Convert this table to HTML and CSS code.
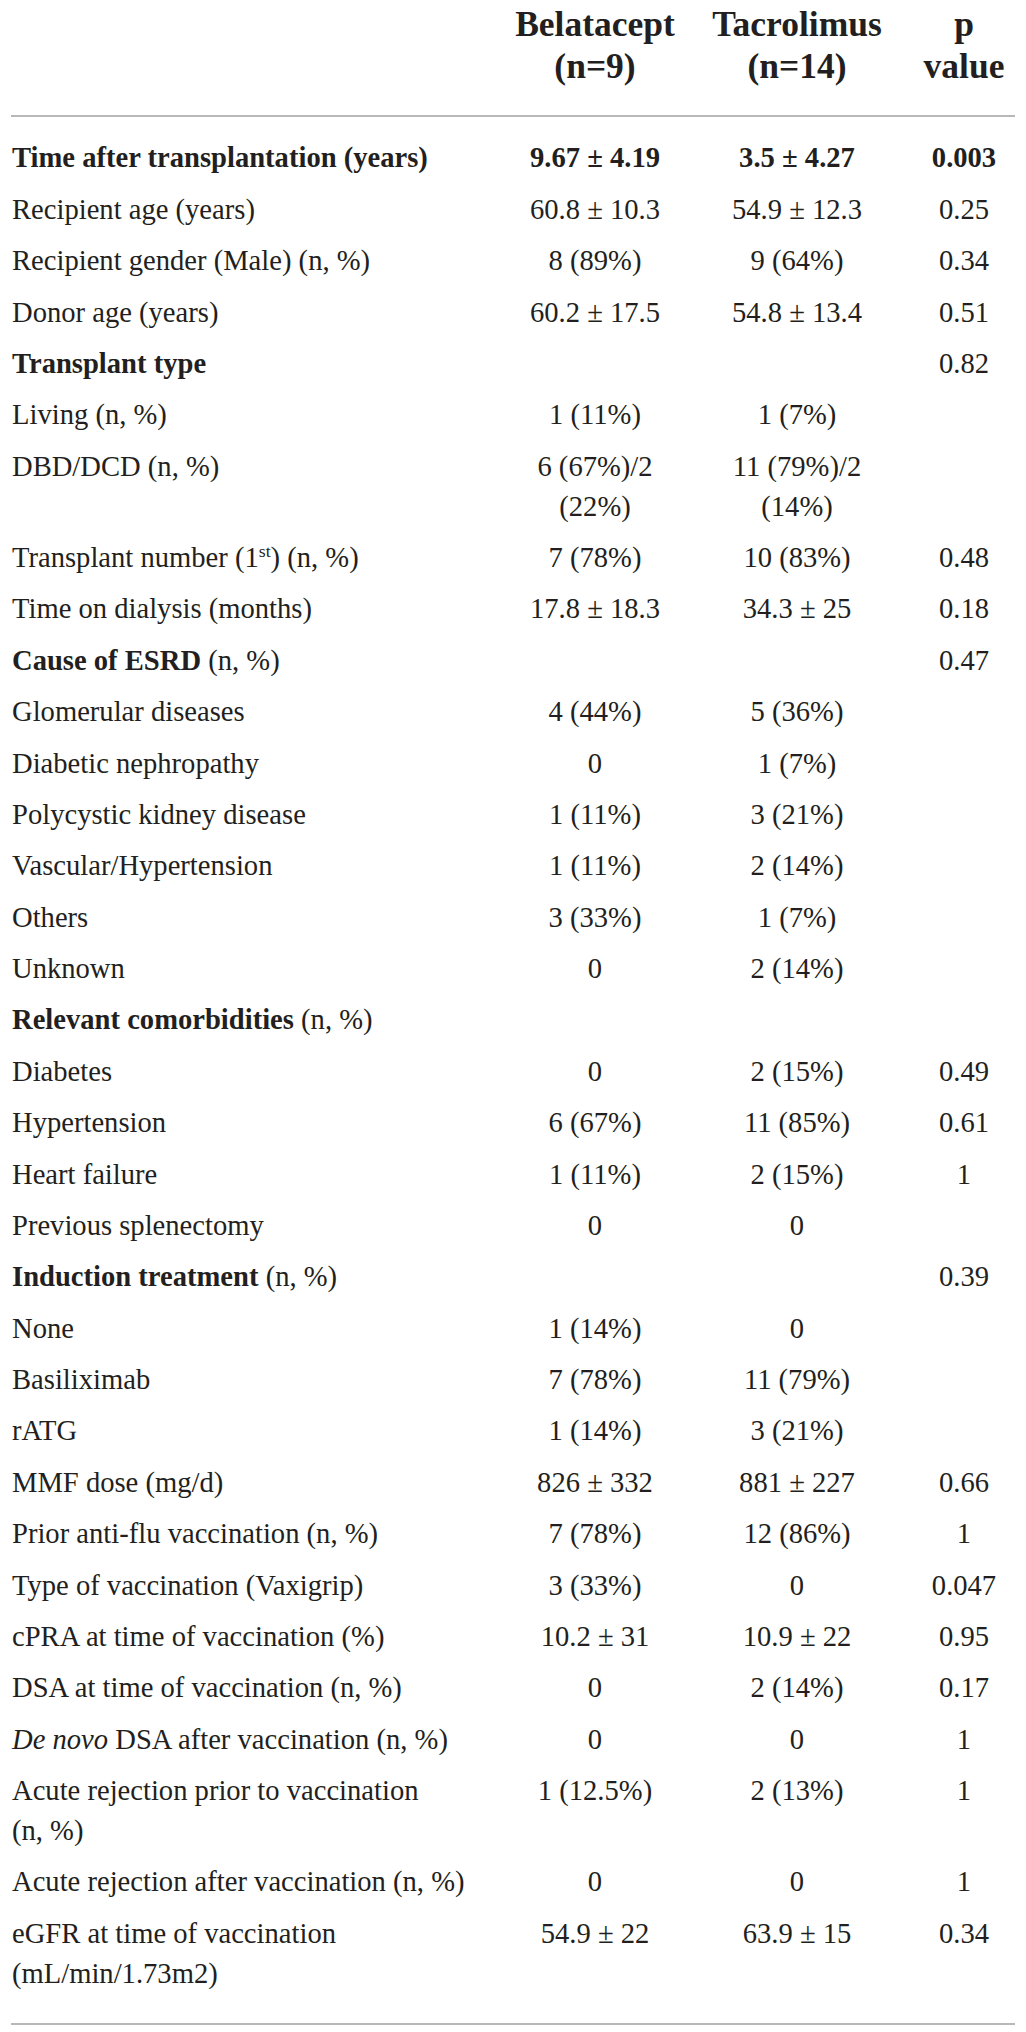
FILE: index.html
```html
<!DOCTYPE html>
<html lang="en">
<head>
<meta charset="utf-8">
<title>Table</title>
<link rel="stylesheet" href="styles.css">
</head>
<body>
<div class="wrap">
<table class="tbl">
  <colgroup>
    <col class="c-label">
    <col class="c-bel">
    <col class="c-tac">
    <col class="c-p">
  </colgroup>
  <thead>
    <tr>
      <th class="lbl"></th>
      <th>Belatacept (n=9)</th>
      <th>Tacrolimus (n=14)</th>
      <th>p value</th>
    </tr>
  </thead>
  <tbody>
    <tr class="first b"><td class="lbl">Time after transplantation (years)</td><td>9.67 ± 4.19</td><td>3.5 ± 4.27</td><td>0.003</td></tr>
    <tr><td class="lbl">Recipient age (years)</td><td>60.8 ± 10.3</td><td>54.9 ± 12.3</td><td>0.25</td></tr>
    <tr><td class="lbl">Recipient gender (Male) (n,&nbsp;%)</td><td>8 (89%)</td><td>9 (64%)</td><td>0.34</td></tr>
    <tr><td class="lbl">Donor age (years)</td><td>60.2 ± 17.5</td><td>54.8 ± 13.4</td><td>0.51</td></tr>
    <tr><td class="lbl"><strong>Transplant type</strong></td><td></td><td></td><td>0.82</td></tr>
    <tr><td class="lbl">Living (n,&nbsp;%)</td><td>1 (11%)</td><td>1 (7%)</td><td></td></tr>
    <tr><td class="lbl">DBD/DCD (n,&nbsp;%)</td><td>6 (67%)/2 (22%)</td><td>11 (79%)/2 (14%)</td><td></td></tr>
    <tr><td class="lbl">Transplant number (1<sup>st</sup>) (n,&nbsp;%)</td><td>7 (78%)</td><td>10 (83%)</td><td>0.48</td></tr>
    <tr><td class="lbl">Time on dialysis (months)</td><td>17.8 ± 18.3</td><td>34.3 ± 25</td><td>0.18</td></tr>
    <tr><td class="lbl"><strong>Cause of ESRD</strong> (n,&nbsp;%)</td><td></td><td></td><td>0.47</td></tr>
    <tr><td class="lbl">Glomerular diseases</td><td>4 (44%)</td><td>5 (36%)</td><td></td></tr>
    <tr><td class="lbl">Diabetic nephropathy</td><td>0</td><td>1 (7%)</td><td></td></tr>
    <tr><td class="lbl">Polycystic kidney disease</td><td>1 (11%)</td><td>3 (21%)</td><td></td></tr>
    <tr><td class="lbl">Vascular/Hypertension</td><td>1 (11%)</td><td>2 (14%)</td><td></td></tr>
    <tr><td class="lbl">Others</td><td>3 (33%)</td><td>1 (7%)</td><td></td></tr>
    <tr><td class="lbl">Unknown</td><td>0</td><td>2 (14%)</td><td></td></tr>
    <tr><td class="lbl"><strong>Relevant comorbidities</strong> (n,&nbsp;%)</td><td></td><td></td><td></td></tr>
    <tr><td class="lbl">Diabetes</td><td>0</td><td>2 (15%)</td><td>0.49</td></tr>
    <tr><td class="lbl">Hypertension</td><td>6 (67%)</td><td>11 (85%)</td><td>0.61</td></tr>
    <tr><td class="lbl">Heart failure</td><td>1 (11%)</td><td>2 (15%)</td><td>1</td></tr>
    <tr><td class="lbl">Previous splenectomy</td><td>0</td><td>0</td><td></td></tr>
    <tr><td class="lbl"><strong>Induction treatment</strong> (n,&nbsp;%)</td><td></td><td></td><td>0.39</td></tr>
    <tr><td class="lbl">None</td><td>1 (14%)</td><td>0</td><td></td></tr>
    <tr><td class="lbl">Basiliximab</td><td>7 (78%)</td><td>11 (79%)</td><td></td></tr>
    <tr><td class="lbl">rATG</td><td>1 (14%)</td><td>3 (21%)</td><td></td></tr>
    <tr><td class="lbl">MMF dose (mg/d)</td><td>826 ± 332</td><td>881 ± 227</td><td>0.66</td></tr>
    <tr><td class="lbl">Prior anti-flu vaccination (n,&nbsp;%)</td><td>7 (78%)</td><td>12 (86%)</td><td>1</td></tr>
    <tr><td class="lbl">Type of vaccination (Vaxigrip)</td><td>3 (33%)</td><td>0</td><td>0.047</td></tr>
    <tr><td class="lbl">cPRA at time of vaccination (%)</td><td>10.2 ± 31</td><td>10.9 ± 22</td><td>0.95</td></tr>
    <tr><td class="lbl">DSA at time of vaccination (n,&nbsp;%)</td><td>0</td><td>2 (14%)</td><td>0.17</td></tr>
    <tr><td class="lbl"><em>De novo</em> DSA after vaccination (n,&nbsp;%)</td><td>0</td><td>0</td><td>1</td></tr>
    <tr><td class="lbl">Acute rejection prior to vaccination (n,&nbsp;%)</td><td>1 (12.5%)</td><td>2 (13%)</td><td>1</td></tr>
    <tr><td class="lbl">Acute rejection after vaccination (n,&nbsp;%)</td><td>0</td><td>0</td><td>1</td></tr>
    <tr class="last"><td class="lbl">eGFR at time of vaccination (mL/min/1.73m2)</td><td>54.9 ± 22</td><td>63.9 ± 15</td><td>0.34</td></tr>
  </tbody>
</table>
</div>
</body>
</html>
```

FILE: styles.css
```css
html, body {
  margin: 0;
  padding: 0;
  background: #ffffff;
}

body {
  font-family: "Liberation Serif", "Times New Roman", serif;
  color: #231f20;
}

.wrap {
  padding: 0 11px;
}

.tbl {
  width: 1004px;
  border-collapse: collapse;
  table-layout: fixed;
}

.c-label { width: 498px; }
.c-bel { width: 172px; }
.c-tac { width: 232px; }
.c-p { width: 102px; }

.tbl th {
  font-size: 35.5px;
  line-height: 42px;
  font-weight: bold;
  text-align: center;
  vertical-align: top;
  padding: 3px 0 28px 0;
  border-bottom: 2px solid #b8b8b8;
}

.tbl td {
  font-size: 28.6px;
  line-height: 40px;
  text-align: center;
  vertical-align: top;
  padding: 5.7px 16px;
}

.tbl td.lbl {
  text-align: left;
  padding-left: 1px;
  padding-right: 27px;
}

.tbl tr.first td {
  padding-top: 21.4px;
}

.tbl tr.last td {
  padding-bottom: 29px;
  border-bottom: 2px solid #b8b8b8;
}

.tbl tr.b td {
  font-weight: bold;
}

.tbl strong {
  font-weight: bold;
}

.tbl em {
  font-style: italic;
}

.tbl sup {
  font-size: 0.62em;
  line-height: 0;
  vertical-align: 0.55em;
}
```
